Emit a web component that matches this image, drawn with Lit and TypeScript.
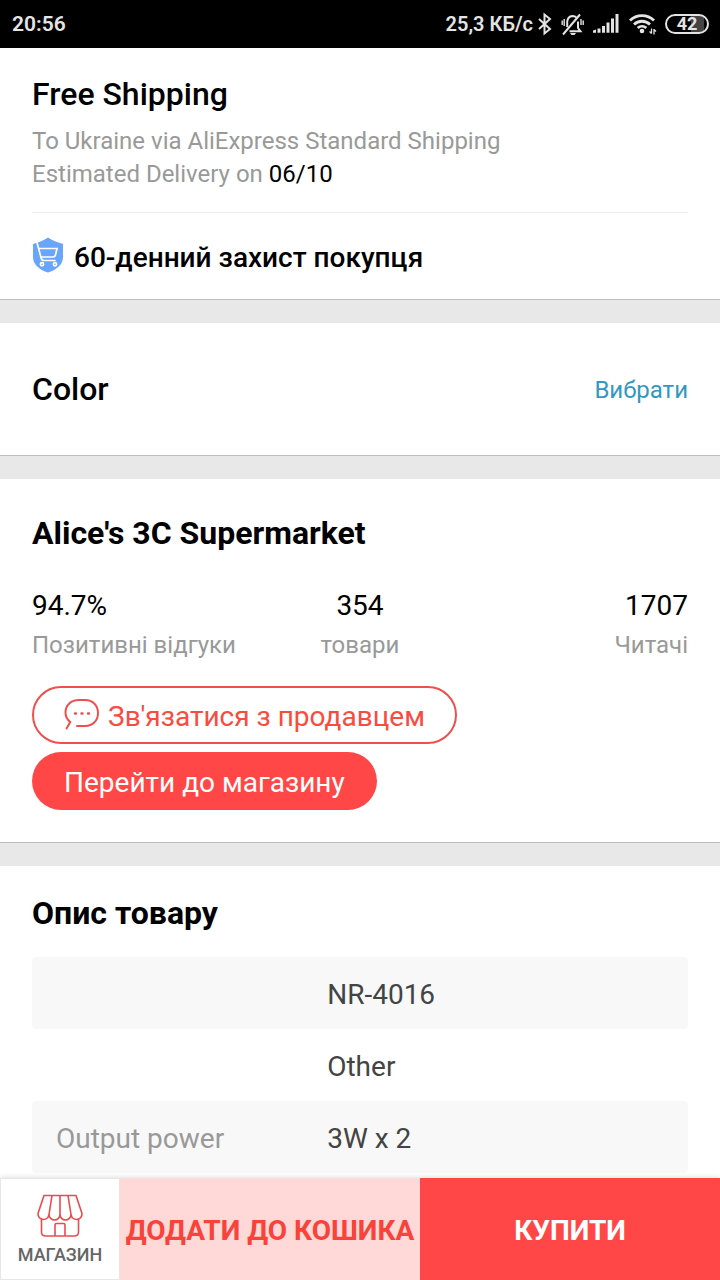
import { LitElement, html, css } from "lit";
import { customElement } from "lit/decorators.js";

const stats = [
  { value: "94.7%", label: "Позитивні відгуки" },
  { value: "354", label: "товари" },
  { value: "1707", label: "Читачі" },
];

const specs = [
  { name: "", value: "NR-4016" },
  { name: "", value: "Other" },
  { name: "Output power", value: "3W x 2" },
];

@customElement("status-bar")
class StatusBar extends LitElement {
  static styles = css`
    :host {
      display: flex;
      flex: none;
      align-items: center;
      justify-content: space-between;
      height: 48px;
      padding: 0 11px 0 12px;
      background: #000;
      color: #e4e4e4;
      font-size: 20px;
      font-weight: 600;
    }
    .clock { font-size: 21px; }
    .icons { display: flex; align-items: center; }
    .bt { margin-left: 4px; }
    .bell, .signal, .wifi, .battery { margin-left: 8px; }
    .battery {
      box-sizing: border-box;
      display: flex;
      align-items: center;
      justify-content: center;
      width: 44px;
      height: 20px;
      border: 2px solid #e4e4e4;
      border-radius: 10px;
      background: linear-gradient(90deg, #000 60%, #444 60%, #444 92%, #000 92%);
      font-size: 18px;
      line-height: 16px;
      font-weight: 700;
    }
  `;

  render() {
    return html`
      <span class="clock">20:56</span>
      <div class="icons">
        <span>25,3 КБ/с</span>
        <svg class="bt" width="16" height="24" viewBox="0 0 16 24" fill="none" stroke="#e4e4e4" stroke-width="2">
          <path d="M2 7l11 10-5.500 4.500v-19L13 7 2 17" />
        </svg>
        <svg class="bell" width="24" height="24" viewBox="0 0 24 24" fill="none" stroke="#e4e4e4" stroke-width="2">
          <path d="M6.200 15V10q.3-5.700 5.300-6 2.500 0 4 1.600M17 9.500v6.500l2.500 3.300H8.500" />
          <path d="M2 22.500 19 2.500" />
          <path d="M1.200 8.500v4.500M3.200 7v7M20 7v6M22.200 8.500v4.500" stroke-width="1.400" />
          <path d="M9 21h6l-1.500 2h-3z" fill="#e4e4e4" stroke="none" />
        </svg>
        <svg class="signal" width="28" height="24" viewBox="0 0 28 24" fill="#e4e4e4">
          <path d="M0 18.500l3-1v3.200H0zM4.500 16.500h3v4.200h-3zM9 14h3v6.700H9zM13.500 10.500h3v10.200h-3zM18 6.500h3v14.200h-3zM22.500 2h3v18.700h-3z" />
        </svg>
        <svg class="wifi" width="28" height="24" viewBox="0 0 28 24" fill="none" stroke="#e4e4e4" stroke-width="2.800">
          <path d="M1 8.500a17 17 0 0 1 24 0M5 12.500a11.500 11.500 0 0 1 16 0M8.700 16a6.500 6.500 0 0 1 8.600 0" />
          <circle cx="13" cy="19" r="2.300" fill="#e4e4e4" stroke="none" />
          <path d="M22.500 16.500v5M25 17v5.500M20.500 19.500l2 2M27 19.500l-2-2" stroke-width="1.300" />
        </svg>
        <span class="battery">42</span>
      </div>
    `;
  }
}

@customElement("app-root")
class AppRoot extends LitElement {
  static styles = css`
    :host {
      display: flex;
      flex-direction: column;
      height: 100vh;
      background: #fff;
      color: #000;
      font-family: Roboto, "Noto Sans", sans-serif;
      font-size: 28px;
    }
    * { box-sizing: border-box; }
    h2, p, dl, dd { margin: 0; }
    h2 { font-size: 32px; line-height: 40px; font-weight: 500; }
    button { font: inherit; border: 0; cursor: pointer; }
    a { text-decoration: none; }
    main {
      display: flex;
      flex: 1;
      flex-direction: column;
      gap: 23px;
      min-height: 0;
      overflow: hidden;
      background: #e8e8e8;
    }
    .card {
      flex: none;
      padding: 0 32px;
      border-bottom: 1px solid #bdbdbd;
      background: #fff;
    }
    .shipping { padding-top: 26px; }
    .delivery {
      padding: 11px 0 21px;
      border-bottom: 1px solid #ebebeb;
      color: #999;
      font-size: 24px;
      line-height: 33px;
    }
    .date { color: #000; }
    .protection {
      display: flex;
      align-items: center;
      gap: 10px;
      height: 86px;
      padding-top: 2px;
      font-weight: 500;
    }
    .option {
      display: flex;
      align-items: center;
      justify-content: space-between;
      height: 133px;
    }
    .choose { padding-top: 2px; color: #3199c0; font-size: 24px; }
    .store { padding-top: 34px; padding-bottom: 32px; }
    .bold { font-weight: 700; }
    .stats {
      display: grid;
      grid-template-columns: repeat(3, 1fr);
      padding: 33px 0 21px;
      text-align: center;
    }
    .stat { display: flex; flex-direction: column-reverse; }
    .stat:first-child { text-align: left; }
    .stat:last-child { text-align: right; }
    .stat dt { color: #999; font-size: 24px; line-height: 39px; }
    .stat dd { line-height: 40px; }
    .actions {
      display: flex;
      flex-direction: column;
      align-items: flex-start;
      gap: 8px;
    }
    .pill {
      display: flex;
      align-items: center;
      gap: 8px;
      height: 58px;
      padding: 2px 32px 0;
      border-radius: 29px;
      background: #ff4747;
      color: #fff;
    }
    .outline {
      padding: 2px 30px 0;
      border: 2px solid #ee5050;
      background: #fff;
      color: #f84c40;
    }
    .description { flex: 1 0 auto; padding-top: 27px; border: 0; }
    table {
      width: 100%;
      margin-top: 24px;
      border-spacing: 0;
      table-layout: fixed;
    }
    th, td { height: 72px; padding: 2px 0 0; text-align: left; font-weight: 400; }
    th { width: 45%; padding-left: 24px; color: #999; }
    td { color: #444; }
    tr:nth-child(odd) > * { background: #f8f8f8; }
    tr > :first-child { border-radius: 4px 0 0 4px; }
    tr > :last-child { border-radius: 0 4px 4px 0; }
    footer {
      display: grid;
      grid-template-columns: 2fr 5fr 5fr;
      flex: none;
      height: 102px;
      box-shadow: 0 -1px 5px rgba(0, 0, 0, 0.12);
      z-index: 1;
    }
    .shop {
      display: flex;
      flex-direction: column;
      align-items: center;
      padding-top: 15px;
      border: 1px solid #e6e6e6;
      background: #fff;
      color: #666;
      font-size: 18px;
      line-height: 34px;
      font-weight: 500;
    }
    .cart, .buy { padding: 2px 0 0; font-weight: 700; white-space: nowrap; }
    .cart { background: #ffd9d7; color: #f8423a; }
    .buy { background: #ff4747; color: #fff; }
  `;

  render() {
    return html`
      <status-bar></status-bar>
      <main>
        <section class="card shipping">
          <h2>Free Shipping</h2>
          <p class="delivery">
            To Ukraine via AliExpress Standard Shipping<br />
            Estimated Delivery on <span class="date">06/10</span>
          </p>
          <div class="protection">
            <svg width="32" height="40" viewBox="0 0 32 40" fill="none" aria-hidden="true">
              <path d="M16 .5C11 4 6 5.500 1 7v13c0 8 7 13 15 15.500C24 33 31 28 31 20V7C26 5.500 21 4 16 .5z" fill="#68a5fb" />
              <g stroke="#fff" stroke-width="1.700">
                <path d="M5 5.500 9 20.500q.5 3 3 3h11" stroke-linecap="round" />
                <path d="M7 11.500h18L23.500 18q-.5 2-2.500 2H9.500" />
                <circle cx="10" cy="27.300" r="1.600" />
                <circle cx="23" cy="27.300" r="1.600" />
              </g>
            </svg>
            <span>60-денний захист покупця</span>
          </div>
        </section>

        <section class="card option">
          <h2>Color</h2>
          <a class="choose" href="#color">Вибрати</a>
        </section>

        <section class="card store">
          <h2 class="bold">Alice's 3C Supermarket</h2>
          <dl class="stats">
            ${stats.map(
              (s) => html`<div class="stat"><dt>${s.label}</dt><dd>${s.value}</dd></div>`
            )}
          </dl>
          <div class="actions">
            <button class="pill outline" type="button">
              <svg width="36" height="36" viewBox="0 0 36 36" fill="none" stroke="#ee5050" stroke-width="2" stroke-linecap="round" aria-hidden="true">
                <path d="M13 28h8c8 0 13-5.500 13-13S29 2 21 2h-6C7 2 1.500 7 1.500 14.500c0 4 1.500 7 4.700 9.500Q5 26.500 2.500 30.500" />
                <path d="M11 15.500h1M17.500 15.500h1M24 15.500h1" stroke-width="2.400" />
              </svg>
              Зв'язатися з продавцем
            </button>
            <button class="pill" type="button">Перейти до магазину</button>
          </div>
        </section>

        <section class="card description">
          <h2 class="bold">Опис товару</h2>
          <table>
            <tbody>
              ${specs.map(
                (s) => html`<tr><th scope="row">${s.name}</th><td>${s.value}</td></tr>`
              )}
            </tbody>
          </table>
        </section>
      </main>
      <footer>
        <button class="shop" type="button">
          <svg width="48" height="44" viewBox="0 0 48 44" fill="none" stroke="#e94b4f" stroke-width="1.600" stroke-linejoin="round" aria-hidden="true">
            <path d="M8 1.500h32l6 18a5.500 5.500 0 0 1-11 1 5.500 5.500 0 0 1-11 0 5.500 5.500 0 0 1-11 0 5.500 5.500 0 0 1-11-1z" />
            <path d="M16 1.500 13 20.500M24 1.500v19M32 1.500l3 19" />
            <path d="M5.500 24.500V38q0 4 4 4h29q4 0 4-4V24.500M19 42V31q0-1.500 1.500-1.500h7q1.500 0 1.500 1.500v11" />
          </svg>
          <span>МАГАЗИН</span>
        </button>
        <button class="cart" type="button">ДОДАТИ ДО КОШИКА</button>
        <button class="buy" type="button">КУПИТИ</button>
      </footer>
    `;
  }
}
